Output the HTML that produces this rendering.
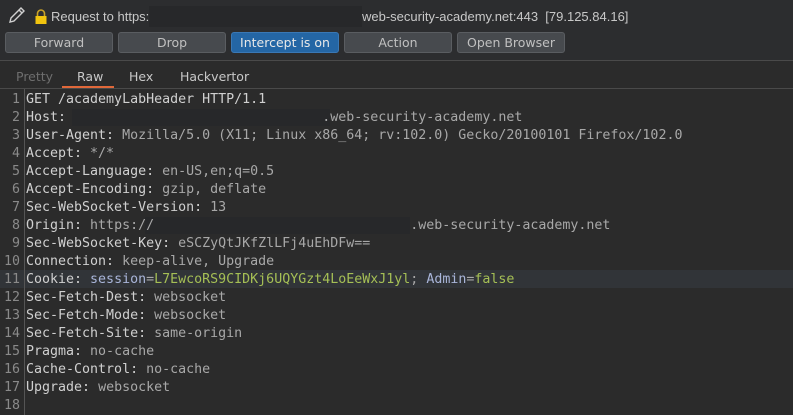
<!DOCTYPE html>
<html><head><style>
*{margin:0;padding:0;box-sizing:border-box}
body{width:793px;height:415px;overflow:hidden;background:#2b2b2b;font-family:"DejaVu Sans","Liberation Sans",sans-serif;color:#bbb;position:relative}
.top{position:absolute;left:0;top:0;width:793px;height:60px;background:#2c2d2f}
.req{position:absolute;top:9px;font-family:"Liberation Sans",sans-serif;font-size:13px;color:#c8c8c8;white-space:nowrap}
.red{position:absolute;background:#27282a}
.btn{position:absolute;top:32px;height:21px;border:1px solid #5a5d61;border-radius:3px;background:#474a4e;color:#c0c0c0;font-size:12.5px;text-align:center;line-height:19px}
.tabs{position:absolute;left:0;top:60px;width:793px;height:29px;background:#2b2b2b;border-top:1px solid #4a4a4a;border-bottom:1px solid #4a4a4a}
.tab{position:absolute;top:8px;font-size:12.5px;color:#c8c8c8}
.ed{position:absolute;left:0;top:89px;width:793px;height:326px;background:#2b2b2b}
.gut{position:absolute;left:24px;top:89px;width:1px;height:326px;background:#555}
.ln{position:absolute;left:0;width:793px;height:18px;font-family:"DejaVu Sans Mono","Liberation Mono",monospace;font-size:13.3px;line-height:18px;white-space:pre}
.n{position:absolute;right:773px;color:#8a8a8a;text-align:right;width:22px}
.t{position:absolute;left:26px;color:#d0d0d0}
.v{color:#a8a8a8}
.b{color:#a9b5d9}.g{color:#a5bf55}
</style></head><body>
<div class="top"></div>
<svg style="position:absolute;left:7px;top:5px" width="20" height="20" viewBox="0 0 20 20"><path d="M3 17 L4 13 L14 3 L17 6 L7 16 Z M12 5 L15 8" fill="none" stroke="#cfcfcf" stroke-width="1.4"/></svg>
<svg style="position:absolute;left:34px;top:9px" width="14" height="16" viewBox="0 0 14 16"><path d="M3.5 7 V4.5 a3.5 3.5 0 0 1 7 0 V7" fill="none" stroke="#c9a227" stroke-width="1.6"/><rect x="1.5" y="7" width="11" height="8" fill="#f1c40f"/></svg>
<div class="req" style="left:51px">Request to https://</div>
<div class="red" style="left:149px;top:6px;width:213px;height:21px"></div>
<div class="req" style="left:362px">web-security-academy.net:443&nbsp;&nbsp;[79.125.84.16]</div>
<div class="btn" style="left:5px;width:108px">Forward</div>
<div class="btn" style="left:118px;width:108px">Drop</div>
<div class="btn" style="left:231px;width:108px;background:#2466a5;border-color:#3a78b5;color:#e8e8e8">Intercept is on</div>
<div class="btn" style="left:344px;width:108px">Action</div>
<div class="btn" style="left:457px;width:108px">Open Browser</div>
<div class="tabs"></div>
<div class="tab" style="left:16px;top:69px;color:#6e6e6e">Pretty</div>
<div class="tab" style="left:77px;top:69px">Raw</div>
<div style="position:absolute;left:62px;top:86px;width:52px;height:2px;background:#e0683a"></div>
<div class="tab" style="left:129px;top:69px">Hex</div>
<div class="tab" style="left:180px;top:69px">Hackvertor</div>
<div class="ed"></div>
<div style="position:absolute;left:0;top:270px;width:793px;height:18px;background:#313438"></div>
<div class="red" style="left:72px;top:109px;width:258px;height:17px"></div>
<div class="red" style="left:145px;top:217px;width:265px;height:17px"></div>
<div class="gut"></div>
<div class="ln" style="top:91px"><span class="n">1</span><span class="t">GET /academyLabHeader HTTP/1.1</span></div>
<div class="ln" style="top:109px"><span class="n">2</span><span class="t">Host: <span class="v">                               .web-security-academy.net</span></span></div>
<div class="ln" style="top:127px"><span class="n">3</span><span class="t">User-Agent: <span class="v">Mozilla/5.0 (X11; Linux x86_64; rv:102.0) Gecko/20100101 Firefox/102.0</span></span></div>
<div class="ln" style="top:145px"><span class="n">4</span><span class="t">Accept: <span class="v">*/*</span></span></div>
<div class="ln" style="top:163px"><span class="n">5</span><span class="t">Accept-Language: <span class="v">en-US,en;q=0.5</span></span></div>
<div class="ln" style="top:181px"><span class="n">6</span><span class="t">Accept-Encoding: <span class="v">gzip, deflate</span></span></div>
<div class="ln" style="top:199px"><span class="n">7</span><span class="t">Sec-WebSocket-Version: <span class="v">13</span></span></div>
<div class="ln" style="top:217px"><span class="n">8</span><span class="t">Origin: <span class="v">https://                                .web-security-academy.net</span></span></div>
<div class="ln" style="top:235px"><span class="n">9</span><span class="t">Sec-WebSocket-Key: <span class="v">eSCZyQtJKfZlLFj4uEhDFw==</span></span></div>
<div class="ln" style="top:253px"><span class="n">10</span><span class="t">Connection: <span class="v">keep-alive, Upgrade</span></span></div>
<div class="ln" style="top:271px"><span class="n">11</span><span class="t">Cookie: <span class="b">session</span><span class="v">=</span><span class="g">L7EwcoRS9CIDKj6UQYGzt4LoEeWxJ1yl</span><span class="v">; </span><span class="b">Admin</span><span class="v">=</span><span class="g">false</span></span></div>
<div class="ln" style="top:289px"><span class="n">12</span><span class="t">Sec-Fetch-Dest: <span class="v">websocket</span></span></div>
<div class="ln" style="top:307px"><span class="n">13</span><span class="t">Sec-Fetch-Mode: <span class="v">websocket</span></span></div>
<div class="ln" style="top:325px"><span class="n">14</span><span class="t">Sec-Fetch-Site: <span class="v">same-origin</span></span></div>
<div class="ln" style="top:343px"><span class="n">15</span><span class="t">Pragma: <span class="v">no-cache</span></span></div>
<div class="ln" style="top:361px"><span class="n">16</span><span class="t">Cache-Control: <span class="v">no-cache</span></span></div>
<div class="ln" style="top:379px"><span class="n">17</span><span class="t">Upgrade: <span class="v">websocket</span></span></div>
<div class="ln" style="top:397px"><span class="n">18</span><span class="t"></span></div>
</body></html>
